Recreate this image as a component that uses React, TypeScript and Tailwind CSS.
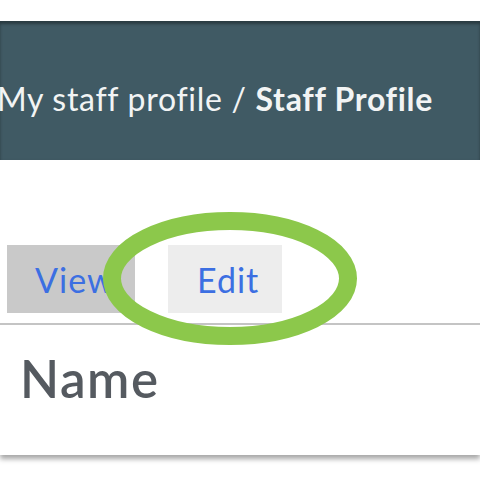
export default function App() {
  return (
    <div className="relative flex h-[480px] w-[480px] flex-col overflow-hidden bg-white font-['Lato','Open_Sans',sans-serif]">
      {/* header band */}
      <div className="mt-[21px] flex h-[139px] items-center bg-[#405a64] pt-[16px] shadow-[inset_0_3px_3px_rgba(0,0,0,0.35)]">
        <p className="ml-[-3px] whitespace-nowrap text-[32px] tracking-[0.7px] text-[#f2f4f4]">
          My staff profile / <span className="font-bold">Staff Profile</span>
        </p>
      </div>

      {/* card */}
      <div className="flex h-[295px] flex-col bg-white shadow-[0_4px_5px_rgba(0,0,0,0.35)]">
        <div className="mt-[85px] flex gap-[33px] border-b-2 border-[#c4c4c4] pb-[10px] pl-[7px]">
          <button className="flex h-[68px] w-[128px] items-center bg-[#c9c9c9] pl-[28px] text-[34px] tracking-[1px] text-[#3c6fe2]">
            View
          </button>
          <button className="flex h-[68px] w-[114px] items-center bg-[#ededed] pl-[29px] text-[34px] tracking-[1px] text-[#3c6fe2]">
            Edit
          </button>
        </div>
        <h2 className="mt-[28px] pl-[20px] text-[51px] font-semibold leading-none tracking-[1.5px] text-[#555a60]">Name</h2>
      </div>

      {/* annotation ring */}
      <svg className="pointer-events-none absolute left-0 top-0" width="480" height="480">
        <ellipse cx="230" cy="278.5" rx="118" ry="57.5" fill="none" stroke="#8cc84b" strokeWidth="18" />
      </svg>
    </div>
  );
}
